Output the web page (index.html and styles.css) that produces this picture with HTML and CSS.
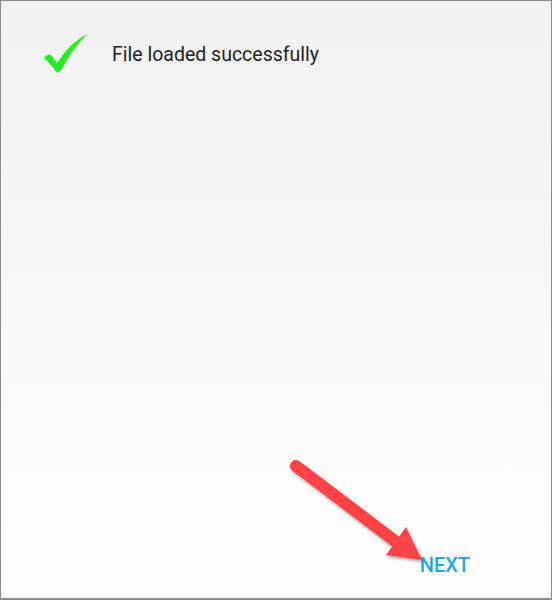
FILE: index.html
```html
<!DOCTYPE html>
<html lang="en">
<head>
  <meta charset="UTF-8">
  <meta name="viewport" content="width=device-width, initial-scale=1.0">
  <title>File loaded</title>
  <link rel="stylesheet" href="styles.css">
</head>
<body>

  <!-- Screen -->
  <div class="screen">
    <div class="status">
      <svg class="check" width="50" height="45" viewBox="0 0 50 45">
        <path d="M4 27 Q8 22 11 24 L17 32 Q30 11 48 3 Q33 16 21 39 Q19 42 16 41 Q12 34 4 27 Z" fill="#1fef1f"/>
      </svg>
      <span class="status-text">File loaded successfully</span>
    </div>

    <div class="actions">
      <span class="next">NEXT</span>
    </div>

    <!-- Annotation arrow -->
    <svg class="arrow" width="170" height="130" viewBox="0 0 170 130">
      <defs>
        <filter id="shadow" x="-20%" y="-20%" width="140%" height="140%">
          <feDropShadow dx="1" dy="2" stdDeviation="1.5" flood-color="#000" flood-opacity="0.35"/>
        </filter>
      </defs>
      <g filter="url(#shadow)">
        <line x1="25" y1="25" x2="124" y2="100" stroke="#ff4245" stroke-width="12" stroke-linecap="round"/>
        <polygon points="151,119 115,114 135,86" fill="#ff4245"/>
      </g>
    </svg>
  </div>

</body>
</html>
```

FILE: styles.css
```css
* {
  box-sizing: border-box;
  margin: 0;
  padding: 0;
}
body {
  font-family: Roboto, "Noto Sans", sans-serif;
  background: #fff;
}
.screen {
  position: relative;
  width: 552px;
  height: 600px;
  border: 1px solid #8c8c8c;
  border-bottom-width: 2px;
  background: linear-gradient(180deg, #f1f1f1 0%, #fbfbfb 70%, #fefefe 100%);
  display: flex;
  flex-direction: column;
  justify-content: space-between;
}
.status {
  display: flex;
  align-items: center;
  padding: 30px 0 0 39px;
}
.check {
  display: block;
}
.status-text {
  margin-left: 22px;
  margin-top: 2px;
  font-size: 19.5px;
  color: #222;
}
.actions {
  display: flex;
  justify-content: flex-end;
  padding: 0 81px 21px 0;
}
.next {
  font-size: 20px;
  font-weight: 500;
  color: #24a8e0;
}
.arrow {
  position: absolute;
  left: 270px;
  top: 440px;
}
```
